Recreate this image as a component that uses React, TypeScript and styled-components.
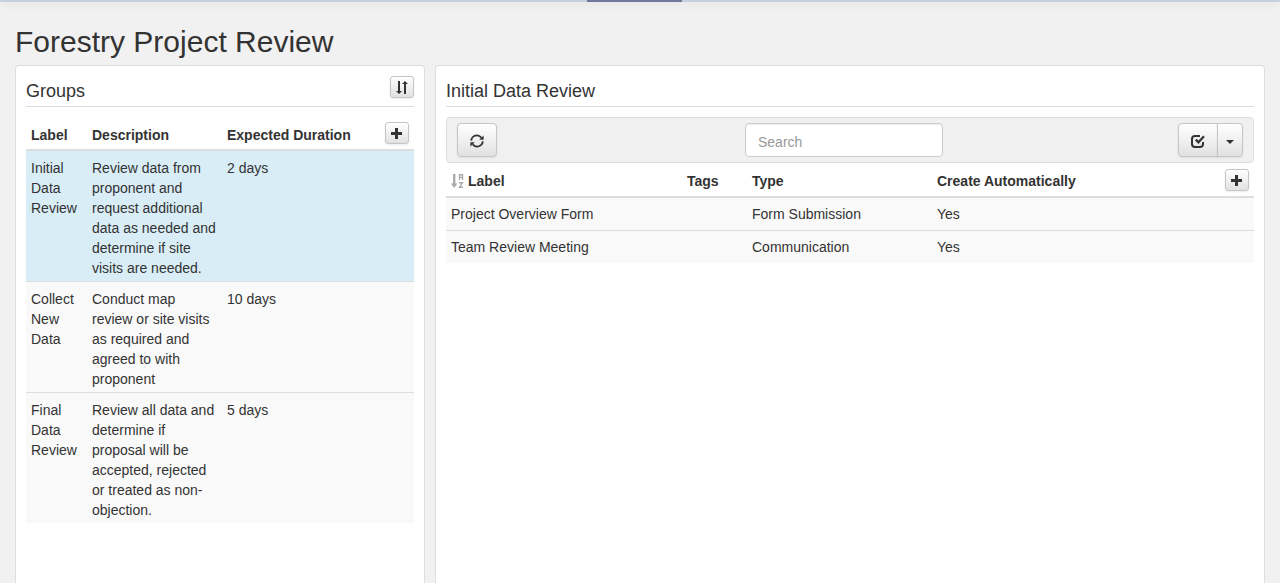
import React from "react";
import styled, { createGlobalStyle, css } from "styled-components";

const Global = createGlobalStyle`
  *, *::before, *::after { box-sizing: border-box; }
  html, body, #root { height: 100%; }
  body {
    margin: 0;
    background: #f1f1f1;
    color: #333;
    font: 14px/20px "Liberation Sans", Arial, sans-serif;
  }
`;

const Page = styled.div`
  min-height: 100%;
  display: flex;
  flex-direction: column;
`;

const TopBar = styled.nav`
  height: 2px;
  background: #c5d1df;
  box-shadow: 0 1px 10px rgba(0, 0, 0, 0.15);
`;

const ActiveTab = styled.div`
  width: 95px;
  height: 2px;
  margin-left: calc(50% - 53px);
  background: #74789a;
`;

const Title = styled.h1`
  margin: 20px 15px 3px;
  font-size: 30px;
  line-height: 40px;
  font-weight: normal;
`;

const Columns = styled.main`
  flex: 1;
  display: grid;
  grid-template-columns: calc((100% + 10px) / 3 - 10px) minmax(0, 1fr);
  gap: 10px;
  padding: 0 15px;
`;

const Panel = styled.section`
  min-width: 0;
  padding: 10px;
  background: #fff;
  border: 1px solid #ddd;
  border-bottom: 0;
  border-radius: 4px 4px 0 0;
`;

const PanelHead = styled.header`
  display: flex;
  justify-content: space-between;
  height: 31px;
  margin-bottom: 10px;
  border-bottom: 1px solid #ddd;
`;

const PanelTitle = styled.h2`
  margin: 0;
  font-size: 18px;
  line-height: 30px;
  font-weight: normal;
`;

const Button = styled.button<{ $large?: boolean; $join?: "left" | "right" }>`
  display: inline-flex;
  align-items: center;
  justify-content: center;
  width: 24px;
  height: 22px;
  padding: 0;
  color: #333;
  background: linear-gradient(#fff, #e1e1e1);
  border: 1px solid #c5c5c5;
  border-radius: 3px;
  box-shadow: 0 1px 2px rgba(0, 0, 0, 0.08);
  ${(p) => p.$large && css`
    width: 40px;
    height: 34px;
    padding-top: 2px;
    border-radius: 4px;
  `}
  ${(p) => p.$join === "left" && css`
    border-radius: 4px 0 0 4px;
  `}
  ${(p) => p.$join === "right" && css`
    width: 26px;
    margin-left: -1px;
    padding-top: 4px;
    border-radius: 0 4px 4px 0;
  `}
`;

const Toolbar = styled.div`
  display: grid;
  grid-template-columns: 1fr auto 1fr;
  align-items: center;
  padding: 5px 10px;
  background: #f0f0f0;
  border: 1px solid #ddd;
  border-radius: 4px;
`;

const ButtonGroup = styled.div`
  display: flex;
  justify-self: end;
`;

const Search = styled.input`
  width: 198px;
  height: 34px;
  margin-right: 12px;
  padding: 8px 12px 4px;
  font: inherit;
  color: #555;
  background: #fff;
  border: 1px solid #ccc;
  border-radius: 4px;
  box-shadow: inset 0 1px 1px rgba(0, 0, 0, 0.075);
  &::placeholder { color: #999; opacity: 1; }
`;

const Table = styled.table`
  width: 100%;
  border-collapse: collapse;
  table-layout: fixed;
`;

const Col = styled.col<{ $w: string }>`
  width: ${(p) => p.$w};
`;

const HeadCell = styled.th<{ $action?: boolean; $tall?: boolean }>`
  height: ${(p) => (p.$tall ? 34 : 33)}px;
  padding: ${(p) => (p.$action ? "0 5px" : "3px 5px 0")};
  text-align: ${(p) => (p.$action ? "right" : "left")};
  vertical-align: middle;
  white-space: nowrap;
  border-bottom: 2px solid #ddd;
  button { vertical-align: middle; }
`;

const Row = styled.tr<{ $selected?: boolean }>`
  background: ${(p) => (p.$selected ? "#d9edf7" : "#f9f9f9")};
  & + & { border-top: 1px solid #ddd; }
`;

const Cell = styled.td<{ $roomy?: boolean }>`
  padding: ${(p) => (p.$roomy ? "6px 5px" : "7px 5px 3px")};
  vertical-align: top;
`;

const SortLabel = styled.span`
  display: flex;
  align-items: center;
  gap: 4px;
`;

const TransferIcon = () => (
  <svg width="14" height="14" viewBox="0 0 14 14" fill="currentColor" aria-hidden="true">
    <path d="M3 1h2v10h2l-3 3-3-3h2zM9 14h2V4h2l-3-3-3 3h2z" />
  </svg>
);

const PlusIcon = () => (
  <svg width="12" height="12" viewBox="0 0 12 12" fill="currentColor" aria-hidden="true">
    <path d="M4 1h3v4h4v3H7v4H4V8H0V5h4z" />
  </svg>
);

const RefreshIcon = () => (
  <svg width="14" height="14" viewBox="0 0 14 14" aria-hidden="true">
    <path d="M1.2 6.6C1.4 3.9 3.6 1.6 6.6 1.4c1.9-.1 3.6.8 4.8 2.4M12.8 7.4c-.2 2.7-2.4 5-5.4 5.2-1.9.1-3.6-.8-4.8-2.4" fill="none" stroke="currentColor" strokeWidth="1.9" />
    <path d="M13.6 1.4v4.4H9.2zM.4 12.6V8.2h4.4z" fill="currentColor" />
  </svg>
);

const CheckIcon = () => (
  <svg width="14" height="14" viewBox="0 0 14 14" fill="none" stroke="currentColor" strokeWidth="2" aria-hidden="true">
    <path d="M9 2H4Q1 2 1 5v5q0 3 3 3h5q3 0 3-3V8" />
    <path d="M4.8 5.5l2.6 2.8L13 2.3" strokeWidth="2.2" />
  </svg>
);

const CaretIcon = () => (
  <svg width="8" height="4" viewBox="0 0 8 4" fill="currentColor" aria-hidden="true">
    <path d="M0 0h8L4 4z" />
  </svg>
);

const SortIcon = () => (
  <svg width="13" height="15" viewBox="0 0 13 15" aria-hidden="true">
    <path d="M2 0h2.4v9.5H6.4L3.2 14 0 9.5h2z" fill="#aaa" />
    <path d="M8.5 6V.8h3V6M8.5 3.4h3M8 8.8h3.4L8.5 13.2H12" fill="none" stroke="#aaa" strokeWidth="1.4" />
  </svg>
);

const groups = [
  { label: "Initial Data Review", description: "Review data from proponent and request additional data as needed and determine if site visits are needed.", duration: "2 days" },
  { label: "Collect New Data", description: "Conduct map review or site visits as required and agreed to with proponent", duration: "10 days" },
  { label: "Final Data Review", description: "Review all data and determine if proposal will be accepted, rejected or treated as non-objection.", duration: "5 days" },
];

const tasks = [
  { label: "Project Overview Form", tags: "", type: "Form Submission", auto: "Yes" },
  { label: "Team Review Meeting", tags: "", type: "Communication", auto: "Yes" },
];

export default function App() {
  return (
    <Page>
      <Global />
      <TopBar><ActiveTab /></TopBar>
      <Title>Forestry Project Review</Title>
      <Columns>
        <Panel>
          <PanelHead>
            <PanelTitle>Groups</PanelTitle>
            <Button type="button" aria-label="Reorder groups"><TransferIcon /></Button>
          </PanelHead>
          <Table>
            <colgroup>
              <Col $w="61px" /><Col $w="135px" /><Col $w="auto" /><Col $w="34px" />
            </colgroup>
            <thead>
              <tr>
                <HeadCell>Label</HeadCell>
                <HeadCell>Description</HeadCell>
                <HeadCell>Expected Duration</HeadCell>
                <HeadCell $action>
                  <Button type="button" aria-label="Add group"><PlusIcon /></Button>
                </HeadCell>
              </tr>
            </thead>
            <tbody>
              {groups.map((g, i) => (
                <Row key={g.label} $selected={i === 0}>
                  <Cell>{g.label}</Cell>
                  <Cell>{g.description}</Cell>
                  <Cell>{g.duration}</Cell>
                  <Cell />
                </Row>
              ))}
            </tbody>
          </Table>
        </Panel>
        <Panel>
          <PanelHead>
            <PanelTitle>Initial Data Review</PanelTitle>
          </PanelHead>
          <Toolbar>
            <Button type="button" $large aria-label="Refresh"><RefreshIcon /></Button>
            <Search type="text" placeholder="Search" aria-label="Search" />
            <ButtonGroup>
              <Button type="button" $large $join="left" aria-label="Select all"><CheckIcon /></Button>
              <Button type="button" $large $join="right" aria-label="Selection options"><CaretIcon /></Button>
            </ButtonGroup>
          </Toolbar>
          <Table>
            <colgroup>
              <Col $w="236px" /><Col $w="65px" /><Col $w="185px" /><Col $w="auto" /><Col $w="34px" />
            </colgroup>
            <thead>
              <tr>
                <HeadCell $tall><SortLabel><SortIcon />Label</SortLabel></HeadCell>
                <HeadCell $tall>Tags</HeadCell>
                <HeadCell $tall>Type</HeadCell>
                <HeadCell $tall>Create Automatically</HeadCell>
                <HeadCell $tall $action>
                  <Button type="button" aria-label="Add task"><PlusIcon /></Button>
                </HeadCell>
              </tr>
            </thead>
            <tbody>
              {tasks.map((t) => (
                <Row key={t.label}>
                  <Cell $roomy>{t.label}</Cell>
                  <Cell $roomy>{t.tags}</Cell>
                  <Cell $roomy>{t.type}</Cell>
                  <Cell $roomy>{t.auto}</Cell>
                  <Cell $roomy />
                </Row>
              ))}
            </tbody>
          </Table>
        </Panel>
      </Columns>
    </Page>
  );
}
